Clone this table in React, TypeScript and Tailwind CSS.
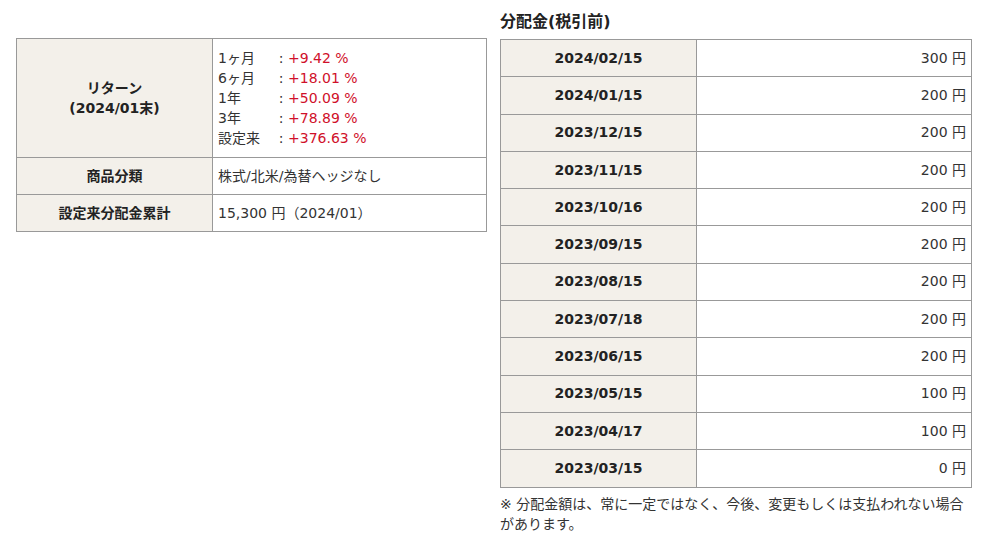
import React from "react";

const returns = [
  { label: "1ヶ月", value: "+9.42 %" },
  { label: "6ヶ月", value: "+18.01 %" },
  { label: "1年", value: "+50.09 %" },
  { label: "3年", value: "+78.89 %" },
  { label: "設定来", value: "+376.63 %" },
];

const dividends = [
  ["2024/02/15", "300"],
  ["2024/01/15", "200"],
  ["2023/12/15", "200"],
  ["2023/11/15", "200"],
  ["2023/10/16", "200"],
  ["2023/09/15", "200"],
  ["2023/08/15", "200"],
  ["2023/07/18", "200"],
  ["2023/06/15", "200"],
  ["2023/05/15", "100"],
  ["2023/04/17", "100"],
  ["2023/03/15", "0"],
];

const th = "border border-[#999] bg-[#f3f0ea] text-center font-bold text-[#222] align-middle";
const td = "border border-[#999] bg-white px-[5px] align-middle";

const App = () => {
  return (
    <div
      className="w-[991px] h-[543px] bg-white text-[14px] text-[#333] flex gap-[13px] pl-[16px] pt-[11px]"
      style={{ fontFamily: '"DejaVu Sans", "Noto Sans CJK JP", sans-serif' }}
    >
      {/* Left: summary */}
      <div className="w-[471px] pt-[27px]">
        <table className="w-full border-collapse">
          <tbody>
            <tr className="h-[119px]">
              <th className={`${th} w-[196px] leading-[20px]`}>
                リターン
                <br />
                (2024/01末)
              </th>
              <td className={`${td} leading-[20px]`}>
                {returns.map((r) => (
                  <div key={r.label} className="flex">
                    <span className="w-[56px]">{r.label}</span>
                    <span className="w-[14px] text-center">:</span>
                    <span className="text-[#d0102a]">{r.value}</span>
                  </div>
                ))}
              </td>
            </tr>
            <tr className="h-[37px]">
              <th className={th}>商品分類</th>
              <td className={td}>株式/北米/為替ヘッジなし</td>
            </tr>
            <tr className="h-[37px]">
              <th className={th}>設定来分配金累計</th>
              <td className={td}>15,300 円（2024/01）</td>
            </tr>
          </tbody>
        </table>
      </div>

      {/* Right: dividends */}
      <div className="w-[472px]">
        <h2 className="text-[16px] font-bold text-[#222] leading-[22px] mb-[6px]">分配金(税引前)</h2>
        <table className="w-full border-collapse">
          <tbody>
            {dividends.map(([date, amount]) => (
              <tr key={date} className="h-[37.3px]">
                <th className={`${th} w-[196px]`}>{date}</th>
                <td className={`${td} text-right`}>{amount} 円</td>
              </tr>
            ))}
          </tbody>
        </table>
        <p className="mt-[6px] leading-[20px] text-[#333]">
          ※ 分配金額は、常に一定ではなく、今後、変更もしくは支払われない場合があります。
        </p>
      </div>
    </div>
  );
};

export default App;
